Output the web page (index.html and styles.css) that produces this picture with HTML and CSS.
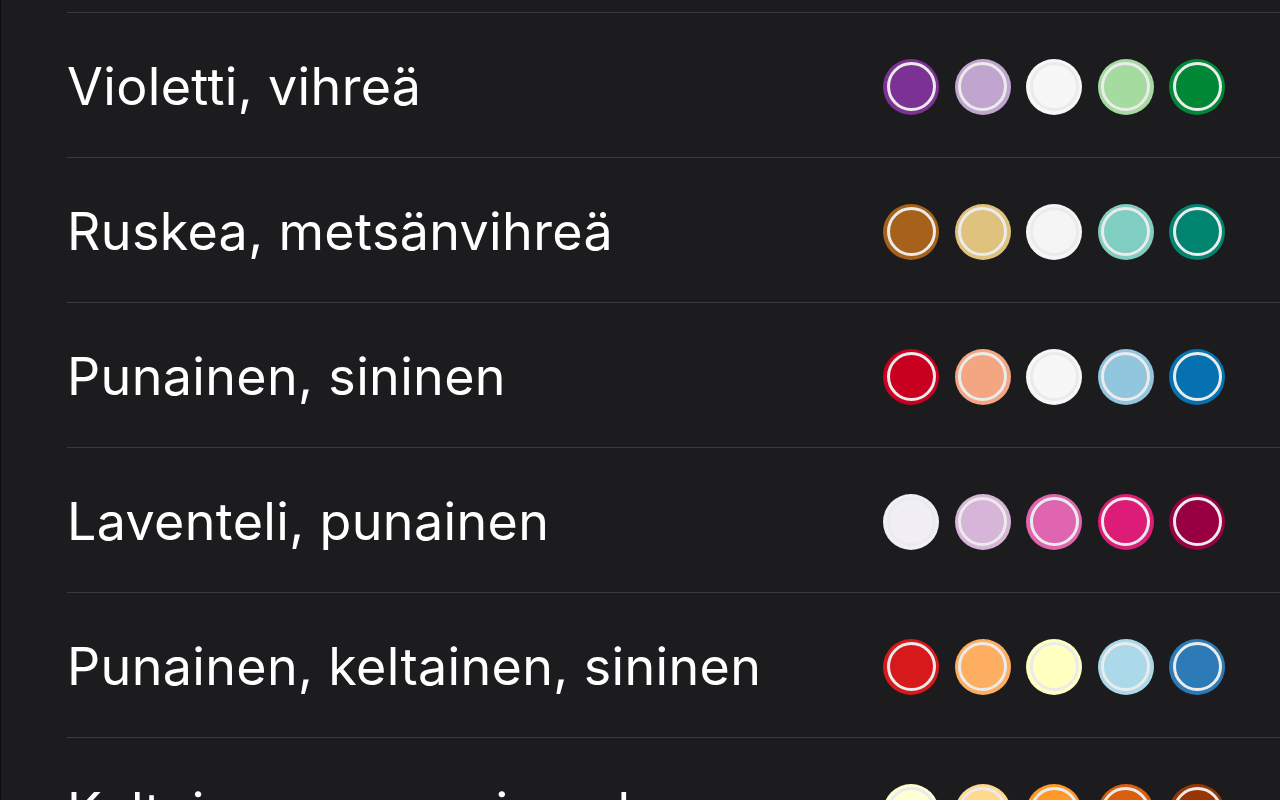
FILE: index.html
```html
<!DOCTYPE html>
<html lang="fi">
<head>
<meta charset="utf-8">
<title>Väriteemat</title>
<link rel="stylesheet" href="styles.css">
</head>
<body>
<div class="screen">
  <ul class="list">
    <li class="row">
      <span class="label">Violetti, vihreä</span>
      <span class="swatches">
        <span class="dot" style="--c:#7b3294"></span>
        <span class="dot" style="--c:#c2a5cf"></span>
        <span class="dot" style="--c:#f7f7f7"></span>
        <span class="dot" style="--c:#a6dba0"></span>
        <span class="dot" style="--c:#008837"></span>
      </span>
    </li>
    <li class="row">
      <span class="label">Ruskea, metsänvihreä</span>
      <span class="swatches">
        <span class="dot" style="--c:#a6611a"></span>
        <span class="dot" style="--c:#dfc27d"></span>
        <span class="dot" style="--c:#f5f5f5"></span>
        <span class="dot" style="--c:#80cdc1"></span>
        <span class="dot" style="--c:#018571"></span>
      </span>
    </li>
    <li class="row">
      <span class="label">Punainen, sininen</span>
      <span class="swatches">
        <span class="dot" style="--c:#ca0020"></span>
        <span class="dot" style="--c:#f4a582"></span>
        <span class="dot" style="--c:#f7f7f7"></span>
        <span class="dot" style="--c:#92c5de"></span>
        <span class="dot" style="--c:#0571b0"></span>
      </span>
    </li>
    <li class="row">
      <span class="label">Laventeli, punainen</span>
      <span class="swatches">
        <span class="dot" style="--c:#f1eef6"></span>
        <span class="dot" style="--c:#d7b5d8"></span>
        <span class="dot" style="--c:#df65b0"></span>
        <span class="dot" style="--c:#dd1c77"></span>
        <span class="dot" style="--c:#980043"></span>
      </span>
    </li>
    <li class="row">
      <span class="label">Punainen, keltainen, sininen</span>
      <span class="swatches">
        <span class="dot" style="--c:#d7191c"></span>
        <span class="dot" style="--c:#fdae61"></span>
        <span class="dot" style="--c:#ffffbf"></span>
        <span class="dot" style="--c:#abd9e9"></span>
        <span class="dot" style="--c:#2c7bb6"></span>
      </span>
    </li>
    <li class="row">
      <span class="label">Keltainen, oranssi, ruskea</span>
      <span class="swatches">
        <span class="dot" style="--c:#ffffd4"></span>
        <span class="dot" style="--c:#fed98e"></span>
        <span class="dot" style="--c:#fe9929"></span>
        <span class="dot" style="--c:#d95f0e"></span>
        <span class="dot" style="--c:#993404"></span>
      </span>
    </li>
  </ul>
</div>
</body>
</html>
```
FILE: styles.css
```css
html, body {
  margin: 0;
  padding: 0;
  height: 100%;
  overflow: hidden;
  background: #1c1c1e;
}

.screen {
  height: 800px;
  box-sizing: border-box;
  border-left: 1px solid #0e0e0f;
  padding-top: 12px;
  padding-left: 66px;
  font-family: Inter, "Noto Sans", sans-serif;
  color: #ffffff;
}

.list {
  list-style: none;
  margin: 0;
  padding: 0;
}

.row {
  display: flex;
  align-items: center;
  justify-content: space-between;
  height: 145px;
  box-sizing: border-box;
  border-top: 1px solid #3a3a3c;
  padding-right: 55px;
  padding-top: 3px;
}

.label {
  font-size: 52px;
  font-weight: 400;
  letter-spacing: 0.35px;
  line-height: 1;
}

.swatches {
  display: flex;
  gap: 15.5px;
}

.dot {
  position: relative;
  width: 56px;
  height: 56px;
  border-radius: 50%;
  background: var(--c);
}

.dot::after {
  content: "";
  position: absolute;
  inset: 3.5px;
  border: 3px solid #ebebeb;
  border-radius: 50%;
}
```
